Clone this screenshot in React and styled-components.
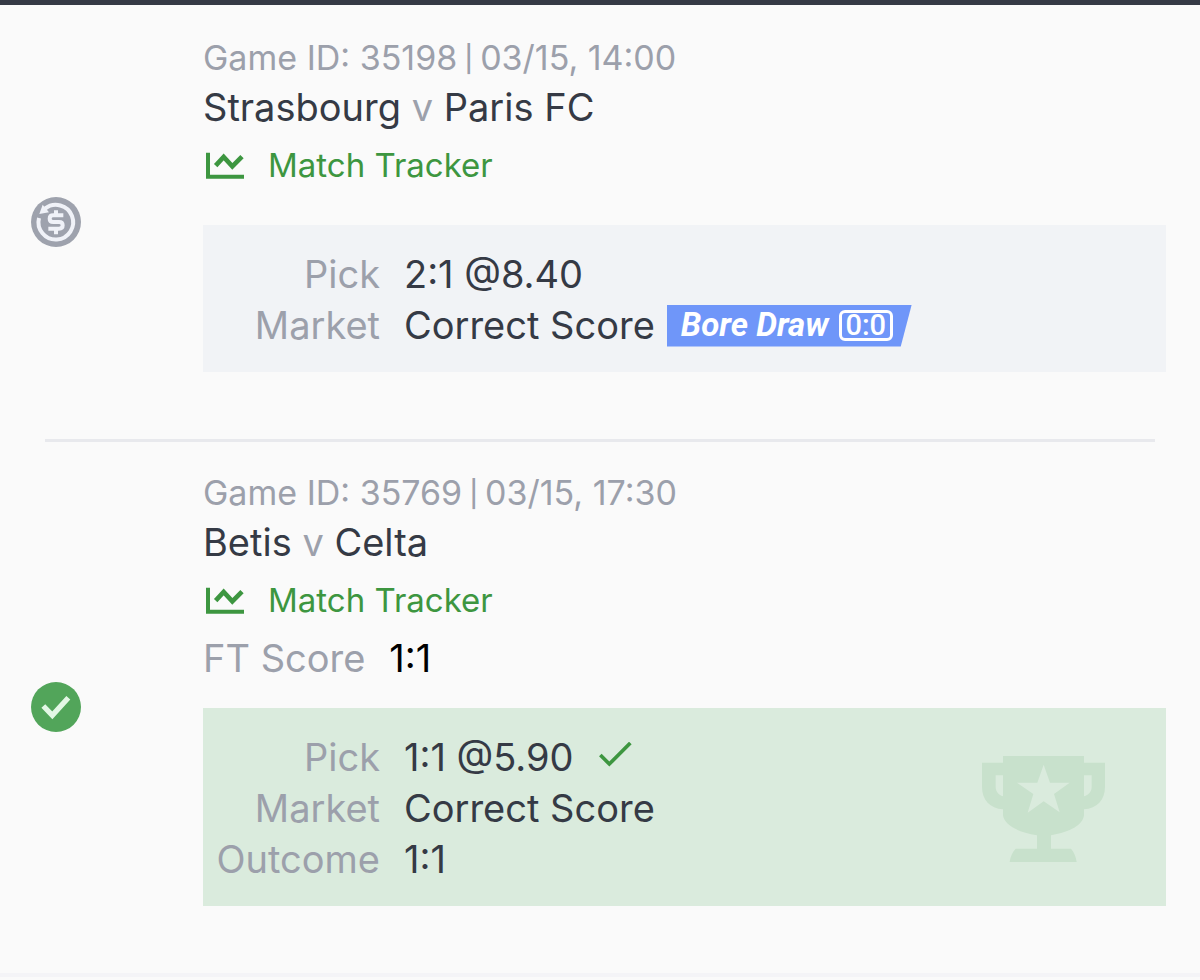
import React from "react";
import styled, { createGlobalStyle } from "styled-components";

const GlobalStyle = createGlobalStyle`
  * { box-sizing: border-box; }
  body {
    margin: 0;
    background: #fafafa;
    color: #353a45;
    font-family: Inter, "Liberation Sans", sans-serif;
  }
`;

const TopBar = styled.header`
  height: 5px;
  background: #353a45;
`;

const BetList = styled.main`
  padding-top: 2px;
  border-bottom: 4px solid #f4f4f7;
`;

const Divider = styled.hr`
  height: 3px;
  margin: 0 45px;
  border: 0;
  background: #e8e9ed;
`;

const Bet = styled.article`
  display: flex;
  align-items: center;
  padding-right: 34px;
`;

const StatusColumn = styled.div`
  flex: 0 0 203px;
  padding: 0 0 2px 31px;
  svg { display: block; }
`;

const Details = styled.div`
  flex: 1;
  min-width: 0;
  padding: 27px 0 67px;
`;

const GameInfo = styled.p`
  margin: 0;
  font-size: 34px;
  line-height: 48px;
  color: #9ca0ab;
`;

const Separator = styled.span`
  font-size: 26px;
  font-weight: 500;
  vertical-align: 2px;
  line-height: 1;
`;

const Teams = styled.h2`
  margin: 0;
  font-size: 38px;
  font-weight: 400;
  line-height: 50px;
  span { color: #9ca0ab; }
`;

const TrackerLink = styled.a`
  display: flex;
  width: fit-content;
  align-items: center;
  gap: 24px;
  margin: 8px 0;
  padding-left: 3px;
  font-size: 33px;
  line-height: 50px;
  color: #3d9640;
  text-decoration: none;
`;

const FinalScore = styled.p`
  display: flex;
  gap: 24px;
  margin: 0;
  font-size: 38px;
  line-height: 50px;
  color: #9ca0ab;
  strong { font-weight: 400; color: #000; }
`;

const PickBox = styled.section`
  display: flex;
  align-items: center;
  justify-content: space-between;
  margin-top: ${(p) => (p.$won ? 25 : 35)}px;
  padding: 24px 61px 21px 0;
  background: ${(p) => (p.$won ? "#daebdd" : "#f1f3f6")};
`;

const Facts = styled.dl`
  display: grid;
  grid-template-columns: 177px auto;
  column-gap: 24px;
  margin: 0;
  font-size: 38px;
  line-height: 51px;
`;

const Label = styled.dt`
  text-align: right;
  color: #9ca0ab;
`;

const Value = styled.dd`
  display: flex;
  align-items: center;
  margin: 0;
  white-space: nowrap;
`;

const Badge = styled.span`
  display: flex;
  align-items: center;
  gap: 10px;
  height: 42px;
  margin-left: 12px;
  padding: 0 19px 2px 14px;
  background: #6f96f9;
  clip-path: polygon(0 0, 100% 0, calc(100% - 11px) 100%, 0 100%);
  color: #fff;
  font: italic 700 33px/38px Roboto, sans-serif;
`;

const ScoreFrame = styled.span`
  display: flex;
  align-items: center;
  justify-content: center;
  width: 54px;
  height: 31px;
  margin-top: 2px;
  border: 3px solid #fff;
  border-radius: 6px;
  font: 500 29px/25px Roboto, sans-serif;
`;

const Tick = styled.svg`
  margin: 0 0 6px 25px;
`;

const RefundIcon = () => (
  <svg width="50" height="50" viewBox="0 0 150 150" role="img" aria-label="Refunded">
    <circle cx="75" cy="75" r="75" fill="#9ea2ad" />
    <path d="M24 63A52 52 0 1 0 42 35" fill="none" stroke="#f0f2f8" strokeWidth="12" />
    <path d="M35 23L25 51L54 46Z" fill="#f0f2f8" />
    <path d="M97 55H67Q56 55 56 65T67 75H84Q95 75 95 85T84 95H52M75 40V56M75 94V112" fill="none" stroke="#f0f2f8" strokeWidth="12" />
  </svg>
);

const WonIcon = () => (
  <svg width="50" height="50" viewBox="0 0 150 150" role="img" aria-label="Won">
    <circle cx="75" cy="75" r="75" fill="#52a55a" />
    <path d="M37 72L64 100L112 47" fill="none" stroke="#e3f7e5" strokeWidth="16" />
  </svg>
);

const ChartIcon = () => (
  <svg width="38" height="27" viewBox="0 0 114 81" aria-hidden="true">
    <path d="M6 2V74H114" fill="none" stroke="#3d9640" strokeWidth="12" />
    <path d="M29 41L53 15L79 43L108 14" fill="none" stroke="#3d9640" strokeWidth="14" />
  </svg>
);

const TickIcon = () => (
  <Tick width="33" height="26" viewBox="0 0 99 78" role="img" aria-label="Correct">
    <path d="M4 39L31 66L94 3" fill="none" stroke="#3d9640" strokeWidth="11" />
  </Tick>
);

const TrophyIcon = () => (
  <svg width="123" height="106" viewBox="0 0 369 318" aria-hidden="true">
    <path
      fill="#c8e1cc"
      fillRule="evenodd"
      d="M63 0H306V20H369V92C369 132 345 157 306 160V178C302 207 266 228 207 238V278H267C276 288 282 302 284 318H83C85 302 91 288 101 278H165V238C106 228 67 207 63 178V160C24 157 0 132 0 92V20H63ZM63 58H41V94C42 108 50 117 63 121ZM306 58V121C320 117 328 108 329 94V58ZM185 26L166 80H105L154 114L137 170L185 136L233 169L216 114L263 80H204Z"
    />
  </svg>
);

const Tracker = () => (
  <TrackerLink href="#tracker">
    <ChartIcon />
    Match Tracker
  </TrackerLink>
);

const bets = [
  { id: "35198", date: "03/15, 14:00", home: "Strasbourg", away: "Paris FC", pick: "2:1 @8.40", boreDraw: true },
  { id: "35769", date: "03/15, 17:30", home: "Betis", away: "Celta", pick: "1:1 @5.90", score: "1:1", won: true },
];

const BetCard = ({ bet }) => (
  <Bet>
    <StatusColumn>{bet.won ? <WonIcon /> : <RefundIcon />}</StatusColumn>
    <Details>
      <GameInfo>
        Game ID: {bet.id}
        <Separator> | </Separator>
        {bet.date}
      </GameInfo>
      <Teams>{bet.home} <span>v</span> {bet.away}</Teams>
      <Tracker />
      {bet.score && (
        <FinalScore>FT Score <strong>{bet.score}</strong></FinalScore>
      )}
      <PickBox $won={bet.won}>
        <Facts>
          <Label>Pick</Label>
          <Value>{bet.pick}{bet.won && <TickIcon />}</Value>
          <Label>Market</Label>
          <Value>
            Correct Score
            {bet.boreDraw && <Badge>Bore Draw <ScoreFrame>0:0</ScoreFrame></Badge>}
          </Value>
          {bet.score && (
            <>
              <Label>Outcome</Label>
              <Value>{bet.score}</Value>
            </>
          )}
        </Facts>
        {bet.won && <TrophyIcon />}
      </PickBox>
    </Details>
  </Bet>
);

export default function App() {
  return (
    <>
      <GlobalStyle />
      <TopBar />
      <BetList>
        <BetCard bet={bets[0]} />
        <Divider />
        <BetCard bet={bets[1]} />
      </BetList>
    </>
  );
}
